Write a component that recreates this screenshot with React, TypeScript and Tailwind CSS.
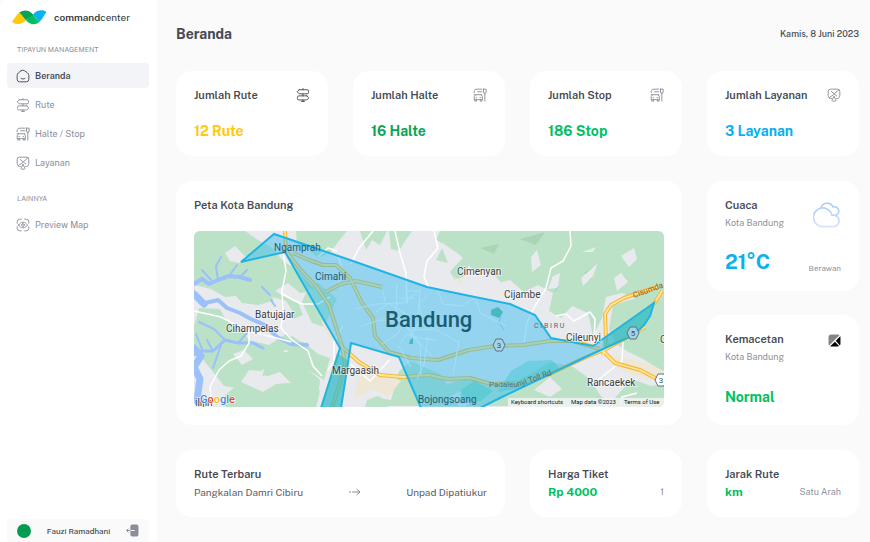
import type { ReactNode } from "react";

const strokeProps = {
  fill: "none",
  stroke: "currentColor",
  strokeWidth: 1.6,
  strokeLinecap: "round" as const,
  strokeLinejoin: "round" as const,
  viewBox: "0 0 24 24",
  "aria-hidden": true,
};

function HomeIcon() {
  return (
    <svg {...strokeProps} className="size-[14px] shrink-0">
      <path d="M9 2.8 4.1 6.6C2.8 7.6 2 9.2 2 10.8v6.8A4.4 4.4 0 0 0 6.4 22h11.2A4.4 4.4 0 0 0 22 17.6v-6.7c0-1.7-.9-3.4-2.3-4.3l-5.2-3.7a5 5 0 0 0-5.5-.1Z" />
      <path d="M8.5 16c2 1.7 5 1.7 7 0" />
    </svg>
  );
}

function RouteIcon() {
  return (
    <svg {...strokeProps} className="size-[14px] shrink-0">
      <path d="M12 1v2M12 10v3.5M12 20.5v2.500M9.5 23h5" />
      <path d="M5.5 3H19a2.500 2.500 0 0 1 2.500 2.500v2A2.500 2.500 0 0 1 19 10H5.500L2 6.500 5.500 3Z" />
      <path d="M18.500 13.500H5A2.500 2.500 0 0 0 2.500 16v2A2.500 2.500 0 0 0 5 20.500h13.500L22 17l-3.500-3.500Z" />
    </svg>
  );
}

function BusIcon() {
  return (
    <svg {...strokeProps} className="size-[14px] shrink-0">
      <path d="M2 8V6.500C2 3.500 4 2 7 2h8" />
      <path d="M8 6.500h7M2 11.500h13" />
      <path d="M4 12 2 15v5h14v-5l-1.500-3" />
      <path d="M3 20v2.500h3V20M12.500 20v2.500h3V20M5 16.500h1M12 16.500h1" />
      <path d="M18 2h4.500v5a2 2 0 0 1-4.500 0V2ZM20.300 9v13.500" />
    </svg>
  );
}

function ServiceIcon() {
  return (
    <svg {...strokeProps} className="size-[14px] shrink-0">
      <path d="M7.500 18H6a4 4 0 0 1-2.800-1.600l-.8-2.400A5 5 0 0 1 2 12V6a4 4 0 0 1 4-4h12a4 4 0 0 1 4 4v6a5 5 0 0 1-.4 2l-.8 2.400A4 4 0 0 1 18 18h-1.500" />
      <path d="m7.500 6 9 7.500M20.500 3 13 9.500M11 11.500 4 16.500" />
      <path d="M12 14.500 8.800 20.500a1.300 1.300 0 0 0 1.200 2h4a1.300 1.300 0 0 0 1.200-2L12 14.500Z" />
    </svg>
  );
}

function PreviewIcon() {
  return (
    <svg {...strokeProps} className="size-[14px] shrink-0">
      <path d="M2 9V6.500A4.500 4.500 0 0 1 6.500 2H9M15 2h2.500A4.500 4.500 0 0 1 22 6.500V9M22 15v2.500a4.500 4.500 0 0 1-4.500 4.500H15M9 22H6.500A4.500 4.500 0 0 1 2 17.500V15" />
      <path d="M4.500 12c1.700-3 4.400-4.800 7.500-4.800s5.800 1.800 7.500 4.800c-1.700 3-4.400 4.800-7.500 4.800S6.200 15 4.500 12Z" />
      <circle cx="12" cy="12" r="2.300" />
    </svg>
  );
}

function TrafficIcon() {
  return (
    <svg viewBox="0 0 24 24" className="size-[13px] shrink-0" aria-hidden>
      <path d="M6 1h12a5 5 0 0 1 3.200 1.200L2.200 21.200A5 5 0 0 1 1 18V6a5 5 0 0 1 5-5Z" fill="#858585" />
      <path d="M22.700 4.300A5 5 0 0 1 23 6v12a5 5 0 0 1-1 3l-7.600-8.400 8.300-8.300ZM12.800 14.200l7.700 8A5 5 0 0 1 18 23H6a5 5 0 0 1-2-.4l8.800-8.400Z" fill="#000" />
    </svg>
  );
}

function CloudIcon() {
  return (
    <svg viewBox="0 0 30 30" className="mt-[3px] size-7 shrink-0" fill="none" strokeWidth="1.800" strokeLinecap="round" strokeLinejoin="round" aria-hidden>
      <defs>
        <linearGradient id="cloud" x1="0" y1="0" x2="0" y2="1">
          <stop offset="0" stopColor="#a3cbf8" />
          <stop offset="1" stopColor="#d9e2f6" />
        </linearGradient>
      </defs>
      <path
        stroke="url(#cloud)"
        d="M10.500 28.500a10 10 0 1 1 9.800-12a6.100 6.100 0 1 1 1.700 12ZM8.500 8.300A7 7 0 0 1 21.500 7.500a4.600 4.600 0 1 1 2.800 9"
      />
    </svg>
  );
}

function Logo() {
  return (
    <svg viewBox="0 0 36 15" className="h-[15px] w-9 shrink-0" aria-hidden>
      <path d="M0 11.500C3 8.500 5 3.500 8 2C10 4 12 8 14 10.200C10 14.500 3 15.500 0 11.500Z" fill="#ffc907" />
      <path d="M21 4.500C24 0 31-1 34.500 2C32 5 30.500 9 27.800 11.500C25 10 23 7.500 21 4.500Z" fill="#06b4f0" />
      <path d="M14 10.200C16 8 18 5 21 4.500C23 8 25 10 27.800 11.500C24 15.500 18 15 14 10.200Z" fill="#02bf62" />
      <path d="M7.500 2.500C11-.3 16-.2 19 2.500L21.500 5C19 6 16 8 14 10.200C12 8 10 5 7.500 2.500Z" fill="#07a456" />
    </svg>
  );
}

const routes = [
  { label: "Rute", icon: <RouteIcon /> },
  { label: "Halte / Stop", icon: <BusIcon /> },
  { label: "Layanan", icon: <ServiceIcon /> },
];

function NavLink({ label, icon, active = false }: { label: string; icon: ReactNode; active?: boolean }) {
  return (
    <a
      href="#"
      aria-current={active ? "page" : undefined}
      className={`flex h-[25px] items-center gap-[5px] rounded pl-[9px] text-[9px] ${
        active ? "bg-[#f3f4f8] font-semibold text-[#464a53]" : "font-normal text-[#8b8e99]"
      }`}
    >
      {icon}
      {label}
    </a>
  );
}

function Sidebar() {
  return (
    <aside className="flex w-[157px] shrink-0 flex-col rounded-tl-lg bg-white pr-2 pl-[7px]">
      <div className="flex h-[34px] items-center gap-[6px] pl-[5px] text-[10px] text-[#343a42]">
        <Logo />
        <span>
          <b className="font-semibold">command</b>center
        </span>
      </div>
      <h2 className="mt-[10px] pl-[10px] text-[7px] leading-3 text-[#8b8e99]">TIPAYUN MANAGEMENT</h2>
      <nav className="mt-[7px] flex flex-col gap-1">
        <NavLink label="Beranda" icon={<HomeIcon />} active />
        {routes.map((r) => (
          <NavLink key={r.label} {...r} />
        ))}
      </nav>
      <h2 className="mt-[18px] pl-[10px] text-[7px] leading-3 text-[#8b8e99]">LAINNYA</h2>
      <nav className="mt-[7px]">
        <NavLink label="Preview Map" icon={<PreviewIcon />} />
      </nav>
      <div className="mt-auto flex h-[23px] items-center rounded-t bg-[#fafafa] px-[10px]">
        <span className="size-[14px] rounded-full bg-[#059b50]" />
        <span className="flex-1 text-center text-[8px] font-medium text-[#464a53]">Fauzi Ramadhani</span>
        <button type="button" aria-label="Keluar" className="text-[#8b8e99]">
          <svg viewBox="0 0 24 24" className="size-[13px]" aria-hidden>
            <path d="M8 7V4.500A3.500 3.500 0 0 1 11.500 1h8A3.500 3.500 0 0 1 23 4.500v15a3.500 3.500 0 0 1-3.500 3.500h-8A3.500 3.500 0 0 1 8 19.500V17" fill="currentColor" />
            <path d="M8 12h8" stroke="#fff" strokeWidth="1.800" />
            <path d="M8 12H1M4.500 8.500 1 12l3.500 3.500" fill="none" stroke="currentColor" strokeWidth="1.800" />
          </svg>
        </button>
      </div>
    </aside>
  );
}

function Card({ className = "", children }: { className?: string; children: ReactNode }) {
  return <section className={`rounded-2xl bg-white px-[18px] ${className}`}>{children}</section>;
}

function Title({ children }: { children: ReactNode }) {
  return <h2 className="text-[11px] leading-4 font-semibold text-[#464a53]">{children}</h2>;
}

const stats = [
  { title: "Jumlah Rute", value: "12 Rute", color: "text-[#ffc90e]", icon: <RouteIcon />, tone: "text-[#464a53]" },
  { title: "Jumlah Halte", value: "16 Halte", color: "text-[#08a557]", icon: <BusIcon />, tone: "text-[#8b8e99]" },
  { title: "Jumlah Stop", value: "186 Stop", color: "text-[#04bf64]", icon: <BusIcon />, tone: "text-[#8b8e99]" },
  { title: "Jumlah Layanan", value: "3 Layanan", color: "text-[#08b1ef]", icon: <ServiceIcon />, tone: "text-[#8b8e99]" },
];

const cityPath =
  "M241 262 274 234 350 260 427 287 470 296 510 304 535 315 551 338 593 346 654 303 650 316 644 325 634 335 590 355 500 398 480 408 421 408 399 357 351 343 341 408 321 408 340 348 285 252Z";

const greens = [
  "M194 231H245L258 240 272 248 283 261 300 272 316 291 300 293 288 283 273 292 258 286 244 278 234 286 217 278 207 284 194 276Z",
  "M194 263 222 267 246 278 266 284 283 296 298 302 303 315 294 319 276 300 258 305 242 303 236 296 225 297 211 289 194 285Z",
  "M199 308 220 309 226 320 241 328 249 340 269 345 286 334 301 340 318 354 330 358 324 380 300 365 286 349 278 357 261 371 249 370 237 388 224 386 214 373 201 357 194 352V326Z",
  "M296 231H347L338 242 330 253 318 258 309 250 297 248Z",
  "M318 283 337 299 331 311 324 327 312 323 302 302 307 291Z",
  "M360 231H387L380 245 372 240 366 250ZM389 231H412L405 241 399 251 391 249Z",
  "M440 231H664V293L644 302 622 293 606 297 602 318 593 336 588 313 572 306 561 318 549 311 553 293 538 285 524 292 510 280 501 282 489 270 473 270 460 255 444 244 436 240Z",
  "M613 305 637 298 664 288V372L643 359 627 351 615 343 609 329Z",
  "M436 260 442 248 448 263ZM456 265 465 256 469 264 465 276 455 280 450 272Z",
  "M225 395 241 382 263 392 276 384 302 382 320 391 316 408H225Z",
  "M268 352 290 352 306 368 320 380 318 396 296 388 280 372 262 378Z",
  "M399 371 411 361 426 368 440 374 447 385 462 379 487 380 503 389 526 376 551 362 573 367 589 378 600 395 612 406H365L374 397 391 400Z",
  "M367 400 378 396 389 402 387 408H365ZM612 401 632 379 651 386 664 384V408H607Z",
];

const greys = [
  "M225 253 235 246 246 257 239 263 230 261Z",
  "M272 297 286 301 293 312 283 315 277 308Z",
  "M291 324 301 319 310 329 303 343 295 338Z",
  "M233 354 244 350 253 359 242 365Z",
  "M212 384 222 392 214 400 206 389Z",
  "M531 257 537 250 541 265 532 272ZM553 276 560 273 558 288 548 289Z",
  "M581 278 598 263 593 276 583 286ZM621 256 634 248 637 259 629 267Z",
  "M582 252 596 247 593 252ZM614 278 621 273 628 282 617 291Z",
  "M534 390 550 377 562 389 550 397ZM449 397 460 391 470 403 462 408Z",
  "M254 382 265 375 271 382 261 388Z",
];

const rivers = [
  "M194 284 202 279 209 284 218 280 229 276 240 277 250 280",
  "M194 295 205 303 218 300 227 308 240 313 251 319 265 325 277 337 291 344 307 345",
  "M194 355 201 351 213 351 225 340 238 343 253 343 263 348",
  "M218 280 216 266 221 257M229 276 237 265M211 280 202 270M262 287 270 295M271 300 275 306M240 277 247 270",
  "M225 340 214 329 199 322M213 351 207 340M238 343 247 333M221 345 213 368M202 349 196 334",
];

const whiteRoads = [
  "M283 251 286 271 282 291 283 311 281 328 292 340 308 351 313 366 322 376",
  "M194 311 221 317 240 327 255 333 273 337 291 342",
  "M281 293 293 300 302 304 318 304 330 297",
  "M211 397 210 387 219 370 229 361 241 356 249 343 249 331",
  "M351 264 359 248 373 231M395 231 400 253 406 273 407 304",
  "M434 231 438 248 427 261 424 276 428 287",
  "M570 231 571 246 563 261 551 268 546 288 535 306 527 322 524 344",
  "M556 316 566 314 574 321 590 312 595 319 594 343",
  "M623 342 622 361 608 372 592 385",
  "M318 257 328 248 337 251M338 256 342 268 339 285",
  "M343 326 334 342 334 361 328 370",
  "M351 364 370 381 385 365 389 360",
  "M620 408 622 397 637 393",
];

const streets = [
  "M355 309 376 304 403 303 421 289M397 285 396 314 410 330 435 329 458 342",
  "M361 326 380 320 401 321 420 343 421 375M405 291 420 291 418 315 427 330",
  "M400 343 407 334 419 338 437 340M382 344 396 335 404 324M398 345 411 367",
  "M426 297 419 303 422 317 411 335 432 356M438 291 443 304 462 306 475 298",
  "M428 337 424 364 417 379M407 315 389 303 376 312M415 298 399 298",
  "M459 341 453 375M475 296 480 313 506 326M385 302 383 291",
];

const highways = [
  "M285 231 286 251 300 269 316 286 329 305 342 346 345 365 332 408",
  "M293 253 309 260 323 265 336 265 350 278 362 303 373 318 375 336 389 352 411 358 438 360 469 350 495 346 523 345 550 341 573 341 600 349",
  "M326 292 341 284 356 281 382 287M340 345 359 362 380 375 403 377 428 375 448 379 470 378 491 384 520 383 550 374 584 358 606 349 645 327",
  "M603 355 606 338 605 314 611 305 624 298 641 292 657 287",
  "M604 352 615 363 640 370 661 381M654 304 662 291",
];

const labels = [
  { x: 274, y: 251, text: "Ngamprah", inside: true },
  { x: 315, y: 280, text: "Cimahi", inside: true },
  { x: 255, y: 318, text: "Batujajar" },
  { x: 226, y: 332, text: "Cihampelas" },
  { x: 332, y: 374, text: "Margaasih" },
  { x: 457, y: 275, text: "Cimenyan" },
  { x: 504, y: 298, text: "Cijambe" },
  { x: 566, y: 341, text: "Cileunyi" },
  { x: 587, y: 386, text: "Rancaekek" },
  { x: 418, y: 403, text: "Bojongsoang", inside: true },
  { x: 195, y: 406, text: "ilijin" },
  { x: 660, y: 343, text: "C" },
];

function CityMap() {
  return (
    <svg
      viewBox="194 231 470 176"
      preserveAspectRatio="xMidYMid slice"
      className="mt-[18px] h-[176px] w-full rounded-md font-['Roboto',sans-serif]"
      role="img"
      aria-label="Peta Kota Bandung"
    >
      <rect x="194" y="231" width="470" height="176" fill="#e8eaed" />
      {greens.map((d) => (
        <path key={d} d={d} fill="#bbe2c6" />
      ))}
      <path d="M584 273 598 264 590 280ZM480 248 499 244 494 254ZM520 239 545 232 536 245ZM303 277 315 290 306 286Z" fill="#a9d5b6" />
      {greys.map((d) => (
        <path key={d} d={d} fill="#e8eaed" />
      ))}
      <path d="M358 377 381 372 401 381 388 397 372 389 354 399ZM611 355 640 361 664 371V382L641 378 617 368ZM321 319 329 329 334 342 325 332ZM453 277 462 280 462 286Z" fill="#efe7d5" />
      <g fill="none" stroke="#9cc0f9" strokeLinecap="round" strokeLinejoin="round">
        {rivers.map((d, i) => (
          <path key={d} d={d} strokeWidth={i < 2 ? 4 : i === 2 ? 3 : 2} />
        ))}
        <path d="M194 294 204 304M194 348 201 356 194 367 200 379 196 408" strokeWidth="7" />
        <path d="M502 312 499 322 504 330M555 291 558 287" strokeWidth="1" />
      </g>
      <g fill="none" stroke="#fff" strokeLinejoin="round">
        {whiteRoads.map((d) => (
          <path key={d} d={d} strokeWidth="1.500" />
        ))}
      </g>
      <g fill="none" strokeLinejoin="round">
        {highways.map((d) => (
          <path key={d} d={d} stroke="#f5b93c" strokeWidth="4" />
        ))}
        {highways.map((d) => (
          <path key={d} d={d} stroke="#ffe69a" strokeWidth="1.800" />
        ))}
        {streets.map((d) => (
          <path key={d} d={d} stroke="#fff" strokeWidth="1" />
        ))}
      </g>
      <path d={cityPath} fill="#2fbaf0" fillOpacity="0.450" stroke="#22b3e6" strokeWidth="2" />
      <path d="M604 339 654 303 648 320 634 335 604 348ZM337 353 347 360 341 408H321Z" fill="#2eb9b6" fillOpacity="0.500" />
      <path d="M511 371 528 361 552 360 560 369 520 388 498 392ZM461 390 474 381 493 391 481 401 460 403Z" fill="#2ec4cc" fillOpacity="0.350" />
      <path d="M491 310 498 307 503 312 499 318 491 315ZM410 340 413 338 413 344H409Z" fill="#4ab9bd" />
      <g stroke="#60717d" strokeWidth="1">
        {[
          { x: 499, y: 345, n: "3", fill: "#a3d3e8" },
          { x: 633, y: 333, n: "5", fill: "#a3d3e8" },
          { x: 661, y: 380, n: "3", fill: "#fff" },
        ].map((s) => (
          <g key={s.x}>
            <path d={`M${s.x - 3} ${s.y - 6}h6l3 6-3 6h-6l-3-6Z`} fill={s.fill} />
            <text x={s.x} y={s.y + 3} textAnchor="middle" fontSize="8" fill="#40505c" stroke="none">
              {s.n}
            </text>
          </g>
        ))}
      </g>
      {labels.map((l) => (
        <text
          key={l.text}
          x={l.x}
          y={l.y}
          fontSize="10"
          fill={l.inside ? "#285b70" : "#3c4043"}
          stroke={l.inside ? "none" : "#fff"}
          strokeOpacity="0.500"
          strokeWidth="2"
          paintOrder="stroke"
        >
          {l.text}
        </text>
      ))}
      <text x="385" y="327" fontSize="22" fontWeight="500" fill="#195d73">
        Bandung
      </text>
      <text x="534" y="328" fontSize="7" fill="#506673">
        C I B I R U
      </text>
      <text x="634" y="298" fontSize="8" fill="#8c5b21" transform="rotate(-20 634 298)">
        Cisumda
      </text>
      <text x="489" y="387" fontSize="8" fill="#53717b">
        Padaleu
      </text>
      <text x="518" y="387" fontSize="8" fill="#53717b" transform="rotate(-20 518 387)">
        nyi Toll Rd
      </text>
      <text x="200" y="403" fontSize="11" fontWeight="500" stroke="#fff" strokeWidth="1" paintOrder="stroke">
        <tspan fill="#4285f4">G</tspan>
        <tspan fill="#ea4335">o</tspan>
        <tspan fill="#fbbc05">o</tspan>
        <tspan fill="#4285f4">g</tspan>
        <tspan fill="#34a853">l</tspan>
        <tspan fill="#ea4335">e</tspan>
      </text>
      <rect x="508" y="398" width="156" height="9" fill="#f1f3f3" fillOpacity="0.850" />
      <g fontSize="6" fill="#111">
        <text x="511" y="404">Keyboard shortcuts</text>
        <text x="571" y="404">Map data ©2023</text>
        <text x="624" y="404">Terms of Use</text>
      </g>
    </svg>
  );
}

export default function App() {
  return (
    <div className="flex min-h-screen bg-[#fafafa] font-['Public_Sans','Inter',sans-serif]">
      <Sidebar />
      <main className="min-w-0 flex-1 pr-[11px] pl-[19px]">
        <header className="mt-6 flex h-5 items-center justify-between text-[#464a53]">
          <h1 className="text-[14px] font-bold">Beranda</h1>
          <time dateTime="2023-06-08" className="text-[9px] font-medium">
            Kamis, 8 Juni 2023
          </time>
        </header>

        <div className="mt-[27px] grid grid-cols-4 gap-[25px]">
          {stats.map((s) => (
            <Card key={s.title} className="pt-4 pb-[14px]">
              <div className="flex h-4 items-center justify-between">
                <Title>{s.title}</Title>
                <span className={s.tone}>{s.icon}</span>
              </div>
              <p className={`mt-[18px] text-[14px] leading-[21px] font-bold ${s.color}`}>{s.value}</p>
            </Card>
          ))}

          <Card className="col-span-3 pt-4 pb-[18px]">
            <Title>Peta Kota Bandung</Title>
            <CityMap />
          </Card>

          <div className="flex flex-col gap-6">
            <Card className="flex-1 pt-4">
              <div className="flex h-[34px] justify-between">
                <div>
                  <Title>Cuaca</Title>
                  <p className="mt-[2px] text-[9px] leading-4 text-[#8f929c]">Kota Bandung</p>
                </div>
                <CloudIcon />
              </div>
              <div className="mt-4 flex items-end justify-between">
                <p className="text-[20px] leading-[30px] font-bold text-[#08b1ef]">21°C</p>
                <p className="text-[8px] leading-[18px] text-[#8f929c]">Berawan</p>
              </div>
            </Card>
            <Card className="flex-1 pt-4">
              <div className="flex justify-between">
                <div>
                  <Title>Kemacetan</Title>
                  <p className="mt-[2px] text-[9px] leading-4 text-[#8f929c]">Kota Bandung</p>
                </div>
                <span className="pt-[3px]">
                  <TrafficIcon />
                </span>
              </div>
              <p className="mt-[22px] text-[14px] leading-[21px] font-bold text-[#04bf64]">Normal</p>
            </Card>
          </div>

          <Card className="col-span-2 pt-4 pb-4">
            <Title>Rute Terbaru</Title>
            <div className="mt-px flex h-[18px] items-center justify-between text-[10px] text-[#5b5e68]">
              <span>Pangkalan Damri Cibiru</span>
              <svg viewBox="0 0 12 8" className="h-2 w-3" fill="none" stroke="#8b8e99" aria-hidden>
                <path d="M0 4h2M3 4h8M7.500 1 11 4 7.500 7" />
              </svg>
              <span>Unpad Dipatiukur</span>
            </div>
          </Card>
          <Card className="pt-4 pb-4">
            <Title>Harga Tiket</Title>
            <div className="mt-px flex h-[18px] items-center justify-between">
              <p className="text-[12px] font-bold text-[#04bf64]">Rp 4000</p>
              <p className="text-[9px] text-[#8f929c]">1</p>
            </div>
          </Card>
          <Card className="pt-4 pb-4">
            <Title>Jarak Rute</Title>
            <div className="mt-px flex h-[18px] items-center justify-between">
              <p className="text-[12px] font-bold text-[#04bf64]">km</p>
              <p className="text-[9px] text-[#8f929c]">Satu Arah</p>
            </div>
          </Card>
        </div>
      </main>
    </div>
  );
}
